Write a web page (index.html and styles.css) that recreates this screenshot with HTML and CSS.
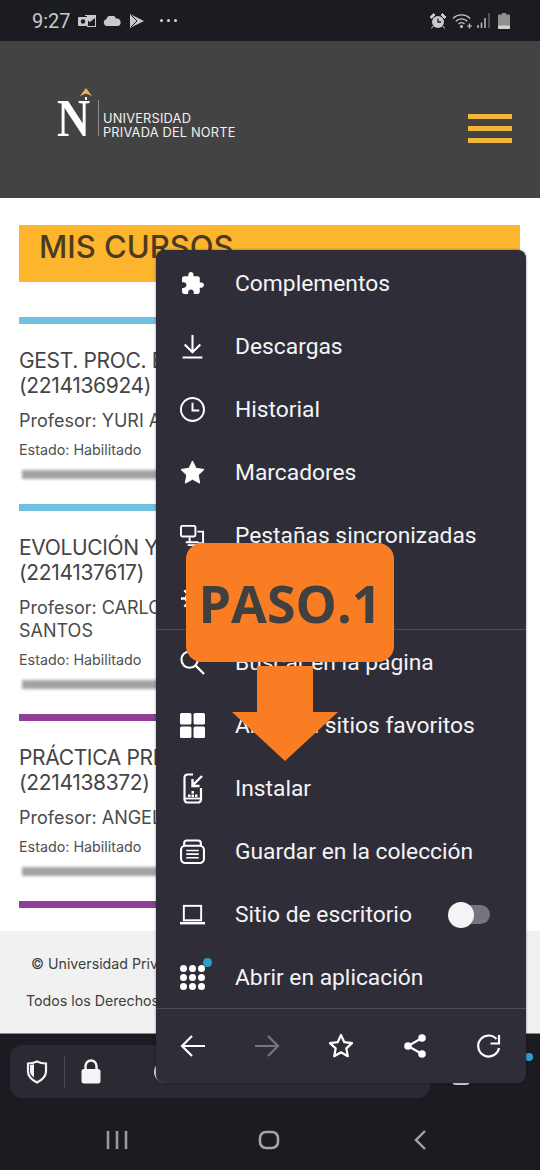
FILE: index.html
```html
<!DOCTYPE html>
<html lang="es">
<head>
  <meta charset="UTF-8">
  <title>Mis cursos</title>
  <meta name="viewport" content="width=device-width, initial-scale=1.0">
  <link rel="stylesheet" href="styles.css">
</head>
<body>
  <div class="phone">

    <!-- Barra de estado -->
    <div class="status">
      <span class="time">9:27</span>
      <svg class="st-mail" viewBox="0 0 18 14"><rect x="0" y="3" width="10" height="9" rx="1" fill="#c9c9c9"/><circle cx="5" cy="7.500" r="2.200" fill="#1b1b22"/><path d="M7 1h11v12H9v-1h8V4l-5 4-3-2V2H7z" fill="#c9c9c9"/></svg>
      <svg class="st-cloud" viewBox="0 0 18 10"><path d="M4 10a3.500 3.500 0 0 1-.5-6.900A5 5 0 0 1 13 2.500 3.800 3.800 0 0 1 14.500 10z" fill="#c9c9c9"/></svg>
      <svg class="st-play" viewBox="0 0 14 14"><path d="M0 0l14 7-14 7z" fill="#c9c9c9"/><path d="M1 1l6 6-6 6" fill="none" stroke="#1b1b22" stroke-width="1"/></svg>
      <span class="st-dots"><i></i><i></i><i></i></span>
      <span class="status-gap"></span>
      <svg class="st-alarm" viewBox="0 0 16 16"><circle cx="8" cy="9" r="6" fill="#c9c9c9"/><path d="M8 5.500V9h3" fill="none" stroke="#1b1b22" stroke-width="1.300"/><path d="M0 4l3.500-3.500L5 2 1.500 5.500zM16 4L12.500.5 11 2l3.500 3.500zM3 13l-1.500 2.500M13 13l1.500 2.500" fill="#c9c9c9" stroke="#c9c9c9"/></svg>
      <svg class="st-wifi" viewBox="0 0 20 16"><path d="M1 5.500a12 12 0 0 1 17 0M3.800 8.300a8 8 0 0 1 11.400 0M6.500 11a4 4 0 0 1 6 0" fill="none" stroke="#c9c9c9" stroke-width="1.300"/><circle cx="9.500" cy="13.500" r="1.500" fill="#c9c9c9"/><path d="M15 13h5M17.500 10.500v5" stroke="#c9c9c9" stroke-width="1.200"/></svg>
      <svg class="st-signal" viewBox="0 0 13 15"><path d="M1 15v-3M4.500 15V9.500M8 15V5" stroke="#b5b5b5" stroke-width="1.600"/><path d="M12 15V0" stroke="#666" stroke-width="1.400"/></svg>
      <svg class="st-batt" viewBox="0 0 12 16"><path d="M4 0h4v1.500h3a1 1 0 0 1 1 1V15a1 1 0 0 1-1 1H1a1 1 0 0 1-1-1V2.500a1 1 0 0 1 1-1h3z" fill="#8f8f8f"/><rect x="0" y="12.500" width="12" height="3.500" rx="1" fill="#d2d2d2"/></svg>
    </div>

    <!-- Cabecera de la web -->
    <header class="site-head">
      <div class="logo">
        <svg class="logo-mark" viewBox="0 0 34 50">
          <path d="M29 0l6 8-6-2.500L23 8z" fill="#eeb45c"/>
          <path d="M29 9v3" stroke="#fff" stroke-width="2"/>
          <text x="0" y="48" textLength="33" lengthAdjust="spacingAndGlyphs" class="logo-n">N</text>
        </svg>
        <span class="logo-rule"></span>
        <span class="logo-text">UNIVERSIDAD<br>PRIVADA DEL NORTE</span>
      </div>
      <div class="burger"><i></i><i></i><i></i></div>
    </header>

    <!-- Contenido -->
    <main class="content">
      <h1 class="banner">MIS CURSOS</h1>

      <section class="course">
        <div class="bar bar-blue"></div>
        <h2>GEST. PROC. B<br>(2214136924)</h2>
        <p class="prof">Profesor: YURI A</p>
        <p class="estado">Estado: Habilitado</p>
        <div class="course-shadow"></div>
      </section>

      <section class="course">
        <div class="bar bar-blue"></div>
        <h2>EVOLUCIÓN Y<br>(2214137617)</h2>
        <p class="prof">Profesor: CARLOS<br>SANTOS</p>
        <p class="estado">Estado: Habilitado</p>
        <div class="course-shadow"></div>
      </section>

      <section class="course">
        <div class="bar bar-purple"></div>
        <h2>PRÁCTICA PRE<br>(2214138372)</h2>
        <p class="prof">Profesor: ANGEL</p>
        <p class="estado">Estado: Habilitado</p>
        <div class="course-shadow"></div>
      </section>

      <div class="bar bar-purple"></div>
    </main>

    <footer class="site-foot">
      <p class="foot-a">© Universidad Privada</p>
      <p class="foot-b">Todos los Derechos</p>
    </footer>

    <!-- Barra del navegador -->
    <div class="browser">
      <div class="urlbar">
        <svg class="ub-shield" viewBox="0 0 22 24"><path d="M11 1.500c3 1.500 6 2 9 2v8c0 5-4 8.500-9 11-5-2.500-9-6-9-11v-8c3 0 6-.5 9-2z" fill="none" stroke="#f2f2f2" stroke-width="2.200"/><path d="M4 5l4-.7V17.500c-2.500-1.800-4-3.800-4-6.500z" fill="#f2f2f2"/></svg>
        <span class="ub-sep"></span>
        <svg class="ub-lock" viewBox="0 0 20 25"><path d="M4.500 11V7a5.500 5.500 0 0 1 11 0v4" fill="none" stroke="#f5f5f5" stroke-width="2.400"/><rect x="0.500" y="10" width="19" height="14.500" rx="2.500" fill="#f5f5f5"/></svg>
        <span class="ub-reload"></span>
      </div>
      <span class="tabs-btn"></span>
      <span class="blue-dot"></span>
      <div class="navkeys">
        <svg class="nk-recent" viewBox="0 0 22 20"><path d="M2 1v18M11 1v18M20 1v18" stroke="#9a9a9f" stroke-width="2.600"/></svg>
        <svg class="nk-home" viewBox="0 0 22 20"><rect x="2" y="2" width="18" height="16" rx="6" fill="none" stroke="#a5a5aa" stroke-width="2.600"/></svg>
        <svg class="nk-back" viewBox="0 0 14 20"><path d="M12 1L3 10l9 9" fill="none" stroke="#a5a5aa" stroke-width="2.400"/></svg>
      </div>
    </div>

    <!-- Menu del navegador, encima de la pagina -->
    <nav class="menu">
      <div class="menu-row">
        <svg class="ic" viewBox="0 0 24 24"><path d="M20.500 11H19V7c0-1.100-.9-2-2-2h-4V3.500C13 2.120 11.880 1 10.500 1S8 2.120 8 3.500V5H4c-1.100 0-1.990.9-1.990 2v3.800H3.500c1.490 0 2.700 1.210 2.700 2.700s-1.210 2.700-2.700 2.700H2V20c0 1.100.9 2 2 2h3.800v-1.500c0-1.490 1.210-2.700 2.700-2.700 1.490 0 2.700 1.210 2.700 2.700V22H17c1.100 0 2-.9 2-2v-4h1.500c1.380 0 2.500-1.120 2.500-2.500S21.880 11 20.500 11z" fill="#fff"/></svg>
        <span class="label">Complementos</span>
      </div>
      <div class="menu-row">
        <svg class="ic" viewBox="0 0 24 24"><path d="M12 1v16M4.500 10l7.500 7.500 7.500-7.500M2.500 22.500h19" fill="none" stroke="#fff" stroke-width="2"/></svg>
        <span class="label">Descargas</span>
      </div>
      <div class="menu-row">
        <svg class="ic" viewBox="0 0 26 26"><circle cx="13" cy="13" r="12" fill="none" stroke="#fff" stroke-width="2"/><path d="M13 6v8h7" fill="none" stroke="#fff" stroke-width="2"/></svg>
        <span class="label">Historial</span>
      </div>
      <div class="menu-row">
        <svg class="ic" viewBox="0 0 26 26"><path d="M13 1l3.700 7.700 8.300 1.100-6 5.900 1.500 8.400-7.500-4.100-7.500 4.100L7 15.700l-6-5.900 8.300-1.100z" fill="#fff" stroke="#fff" stroke-linejoin="round"/></svg>
        <span class="label">Marcadores</span>
      </div>
      <div class="menu-row">
        <svg class="ic" viewBox="0 0 26 26"><rect x="1" y="3" width="15" height="11" rx="1.500" fill="none" stroke="#fff" stroke-width="2"/><path d="M18 9h6v12h-5M6 20h13M8 23h10M10 15v4" fill="none" stroke="#fff" stroke-width="2"/></svg>
        <span class="label">Pestañas sincronizadas</span>
      </div>
      <div class="menu-row">
        <svg class="ic" viewBox="0 0 26 26"><circle cx="13" cy="13" r="7" fill="none" stroke="#fff" stroke-width="2"/><path d="M13 1v5M13 20v5M1 13h5M20 13h5M4.500 4.500l3.500 3.500M18 18l3.500 3.500M4.500 21.500L8 18M18 8l3.500-3.500" stroke="#fff" stroke-width="2.400"/></svg>
        <span class="label">Ajustes</span>
      </div>
      <div class="menu-sep"></div>
      <div class="menu-row">
        <svg class="ic" viewBox="0 0 26 26"><circle cx="10" cy="10" r="8.500" fill="none" stroke="#fff" stroke-width="2.200"/><path d="M16 16l9 9" stroke="#fff" stroke-width="2.400"/></svg>
        <span class="label">Buscar en la página</span>
      </div>
      <div class="menu-row">
        <svg class="ic" viewBox="0 0 24 24"><rect x="0" y="0" width="11" height="11" rx="1.500" fill="#fff"/><rect x="13" y="0" width="11" height="11" rx="1.500" fill="#fff"/><rect x="0" y="13" width="11" height="11" rx="1.500" fill="#fff"/><rect x="13" y="13" width="11" height="11" rx="1.500" fill="#fff"/></svg>
        <span class="label">Añadir a sitios favoritos</span>
      </div>
      <div class="menu-row">
        <svg class="ic ic-tall" viewBox="0 0 25 31"><path d="M13 1.500H7.500a3 3 0 0 0-3 3v22a3 3 0 0 0 3 3h10.500a3 3 0 0 0 3-3V15" fill="none" stroke="#fff" stroke-width="2.200"/><path d="M22 3l-8.500 8.500M12.500 6v7h7" fill="none" stroke="#fff" stroke-width="2.400"/><path d="M5 25.500h15" stroke="#fff" stroke-width="1.800"/><path d="M8 21.500h2.500V24H8zM11.500 21.500H14V24h-2.500zM15 21.500h2.500V24H15zM11.500 18H14v2.500h-2.500z" fill="#fff"/></svg>
        <span class="label">Instalar</span>
      </div>
      <div class="menu-row">
        <svg class="ic" viewBox="0 0 24 24"><path d="M4 7V4a2.500 2.500 0 0 1 2.500-2.500h11A2.500 2.500 0 0 1 20 4v3" fill="none" stroke="#fff" stroke-width="2"/><rect x="1" y="6.500" width="22" height="16.500" rx="4" fill="none" stroke="#fff" stroke-width="2"/><path d="M6 11h12M6 14.500h12M6 18h12" stroke="#fff" stroke-width="1.600"/></svg>
        <span class="label">Guardar en la colección</span>
      </div>
      <div class="menu-row">
        <svg class="ic" viewBox="0 0 26 24"><rect x="4" y="3" width="18" height="15" fill="none" stroke="#fff" stroke-width="2"/><path d="M0 21h26" stroke="#fff" stroke-width="2.600"/></svg>
        <span class="label">Sitio de escritorio</span>
        <span class="toggle"><i></i></span>
      </div>
      <div class="menu-row">
        <span class="ic ic-dots">
          <i></i><i></i><i></i><i></i><i></i><i></i><i></i><i></i><i></i>
          <b class="ic-badge"></b>
        </span>
        <span class="label">Abrir en aplicación</span>
      </div>
      <div class="menu-sep"></div>
      <div class="menu-tools">
        <svg viewBox="0 0 26 24"><path d="M25 12H2M12 2L2 12l10 10" fill="none" stroke="#fff" stroke-width="2.200"/></svg>
        <svg viewBox="0 0 26 24"><path d="M1 12h23M14 2l10 10-10 10" fill="none" stroke="#77767e" stroke-width="2.200"/></svg>
        <svg viewBox="0 0 26 26"><path d="M13 2l3.300 7.200 7.700.9-5.700 5.300 1.500 7.800-6.800-3.900-6.800 3.900 1.500-7.800L2 10.100l7.700-.9z" fill="none" stroke="#fff" stroke-width="2.200" stroke-linejoin="round"/></svg>
        <svg viewBox="0 0 26 26"><path d="M20 5L6 13l14 8" fill="none" stroke="#fff" stroke-width="2.200"/><circle cx="20" cy="5" r="3.800" fill="#fff"/><circle cx="6" cy="13" r="3.800" fill="#fff"/><circle cx="20" cy="21" r="3.800" fill="#fff"/></svg>
        <svg viewBox="0 0 26 26"><path d="M23 15a10.500 10.500 0 1 1-2.500-9" fill="none" stroke="#fff" stroke-width="2.200"/><path d="M23 2v8.500h-8.500" fill="none" stroke="#fff" stroke-width="2.200"/></svg>
      </div>
    </nav>

    <!-- Indicacion del paso -->
    <div class="paso">PASO.1</div>
    <svg class="paso-arrow" viewBox="0 0 106 95"><path d="M25 0h56v46h25L53 95 0 46h25z" fill="#fb7d23"/></svg>
  </div>
</body>
</html>
```

FILE: styles.css
```css
html, body {
  margin: 0;
  padding: 0;
  background: #fff;
}
.phone {
  position: relative;
  width: 540px;
  height: 1170px;
  overflow: hidden;
  display: flex;
  flex-direction: column;
  font-family: Inter, "Liberation Sans", sans-serif;
}

/* barra de estado */
.status {
  height: 41px;
  background: #1b1b22;
  display: flex;
  align-items: center;
  padding: 0 30px 0 32px;
  color: #c9c9c9;
}
.time {
  font-family: Roboto, sans-serif;
  font-size: 20px;
  width: 46px;
}
.st-mail { width: 18px; height: 14px; margin-right: 7px; }
.st-cloud { width: 18px; height: 10px; margin-right: 9px; }
.st-play { width: 14px; height: 14px; margin-right: 16px; }
.st-dots { display: flex; gap: 4px; }
.st-dots i { width: 3px; height: 3px; border-radius: 50%; background: #d5d5d5; }
.status-gap { flex: 1; }
.st-alarm { width: 16px; height: 16px; margin-right: 6px; }
.st-wifi { width: 20px; height: 16px; margin-right: 5px; }
.st-signal { width: 13px; height: 15px; margin-right: 8px; }
.st-batt { width: 12px; height: 16px; }

/* cabecera */
.site-head {
  height: 157px;
  background: #434343;
  display: flex;
  align-items: center;
  justify-content: space-between;
  padding: 0 28px 0 57px;
}
.logo {
  display: flex;
  align-items: flex-end;
  margin-bottom: 13px;
}
.logo-mark { width: 34px; height: 50px; overflow: visible; }
.logo-n {
  font-family: "Liberation Serif", serif;
  font-weight: bold;
  font-size: 52px;
  fill: #fff;
}
.logo-rule {
  width: 1px;
  height: 36px;
  background: #8d8d8d;
  margin: 0 4px 2px 7px;
}
.logo-text {
  font-size: 12.800px;
  line-height: 13.500px;
  color: #f1f1f1;
  letter-spacing: 0.200px;
  margin-bottom: -1px;
  white-space: nowrap;
}
.burger { display: flex; flex-direction: column; gap: 7px; margin-top: 18px; }
.burger i { display: block; width: 44px; height: 5px; background: #f2b63c; }

/* contenido */
.content {
  flex: 1;
  background: #fff;
  padding: 27px 20px 0 19px;
}
.banner {
  margin: 0 0 35px;
  height: 57px;
  box-sizing: border-box;
  padding: 2px 0 0 20px;
  background: #fdb52d;
  color: #4a3c20;
  font-size: 31px;
  line-height: 40px;
  font-weight: 500;
}
.bar { height: 7px; }
.bar-blue { background: #6fc1e0; }
.bar-purple { background: #8f3f96; }
.course { padding-bottom: 26px; }
.course h2 {
  margin: 24px 0 0;
  font-size: 21px;
  line-height: 25px;
  font-weight: 400;
  letter-spacing: -0.350px;
  color: #454545;
  white-space: nowrap;
}
.prof {
  margin: 11px 0 0;
  font-size: 18px;
  line-height: 23px;
  color: #4b4b4b;
}
.estado {
  margin: 8px 0 0;
  font-size: 14.300px;
  line-height: 20px;
  color: #505050;
}
.course-shadow {
  height: 9px;
  margin: 10px 0 -1px 3px;
  background: #a3a3a3;
  filter: blur(1.500px);
}

/* pie */
.site-foot {
  height: 103px;
  box-sizing: border-box;
  background: #f1f1f1;
  border-bottom: 1px solid #8a8a8a;
  padding-top: 23px;
  color: #3d3d3d;
  font-size: 14.200px;
  line-height: 20px;
}
.site-foot p { margin: 0; }
.foot-a { padding-left: 31px; }
.foot-b { padding: 17px 0 0 26px; }

/* navegador */
.browser {
  position: relative;
  height: 136px;
  background: #1b1b22;
}
.urlbar {
  height: 53px;
  margin: 11px 110px 0 10px;
  background: #2b2a33;
  border-radius: 12px;
  display: flex;
  align-items: center;
  padding-left: 16px;
}
.ub-shield { width: 22px; height: 24px; }
.ub-sep { width: 1px; height: 32px; background: #4b4a54; margin: 0 16px; }
.ub-lock { width: 20px; height: 25px; }
.ub-reload {
  width: 18px;
  height: 18px;
  margin-left: 53px;
  border: 2px solid #d8d8d8;
  border-radius: 50%;
}
.tabs-btn {
  position: absolute;
  left: 452px;
  top: 30px;
  width: 14px;
  height: 17px;
  border: 2px solid #d8d8d8;
  border-radius: 4px;
}
.blue-dot {
  position: absolute;
  right: 7px;
  top: 19px;
  width: 8px;
  height: 8px;
  border-radius: 50%;
  background: #2a9fcf;
}
.navkeys {
  display: grid;
  grid-template-columns: repeat(3, 151.500px);
  justify-content: center;
  justify-items: center;
  margin: 32px 3px 0 0;
}
.navkeys svg { height: 20px; }
.nk-recent { width: 22px; }
.nk-home { width: 22px; }
.nk-back { width: 14px; }

/* menu */
.menu {
  position: absolute;
  left: 156px;
  top: 250px;
  width: 370px;
  height: 833px;
  box-sizing: border-box;
  padding-top: 2px;
  background: #2f2e38;
  border-radius: 8px;
  color: #f4f4f6;
  font-family: Roboto, sans-serif;
  font-size: 22.800px;
  box-shadow: 0 0 3px rgba(0,0,0,.4);
}
.menu-row {
  height: 63px;
  display: flex;
  align-items: center;
  padding-left: 24px;
  position: relative;
}
.label { margin-left: 30px; }
.ic { width: 25px; height: 25px; flex: none; }
.ic-tall { height: 31px; }
.menu-sep { height: 1px; background: #4c4b55; margin-top: -1px; margin-bottom: 1px; }
.toggle {
  position: absolute;
  left: 292px;
  top: 22px;
  width: 42px;
  height: 19px;
}
.toggle::before {
  content: "";
  position: absolute;
  left: 4px;
  right: 0;
  top: 0;
  bottom: 0;
  border-radius: 10px;
  background: #76757e;
}
.toggle i {
  position: absolute;
  left: 0;
  top: -3px;
  width: 26px;
  height: 26px;
  border-radius: 50%;
  background: #f4f4f6;
}
.ic-dots {
  position: relative;
  display: grid;
  grid-template-columns: repeat(3, 7px);
  grid-auto-rows: 7px;
  gap: 2px;
  align-content: center;
}
.ic-dots i { background: #fff; border-radius: 50%; }
.ic-badge {
  position: absolute;
  left: 23px;
  top: -7px;
  width: 9px;
  height: 9px;
  border-radius: 50%;
  background: #2a9fcf;
}
.menu-tools {
  display: grid;
  grid-template-columns: repeat(5, 74px);
  justify-items: center;
  align-items: center;
  height: 72px;
}
.menu-tools svg { width: 26px; height: 26px; }

/* paso */
.paso {
  position: absolute;
  left: 186px;
  top: 543px;
  width: 208px;
  height: 119px;
  border-radius: 16px;
  background: #fb7d23;
  color: #404040;
  font-family: "Open Sans", sans-serif;
  font-weight: 700;
  font-size: 52px;
  line-height: 120px;
  text-align: center;
}
.paso-arrow {
  position: absolute;
  left: 232px;
  top: 666px;
  width: 106px;
  height: 95px;
}
```
